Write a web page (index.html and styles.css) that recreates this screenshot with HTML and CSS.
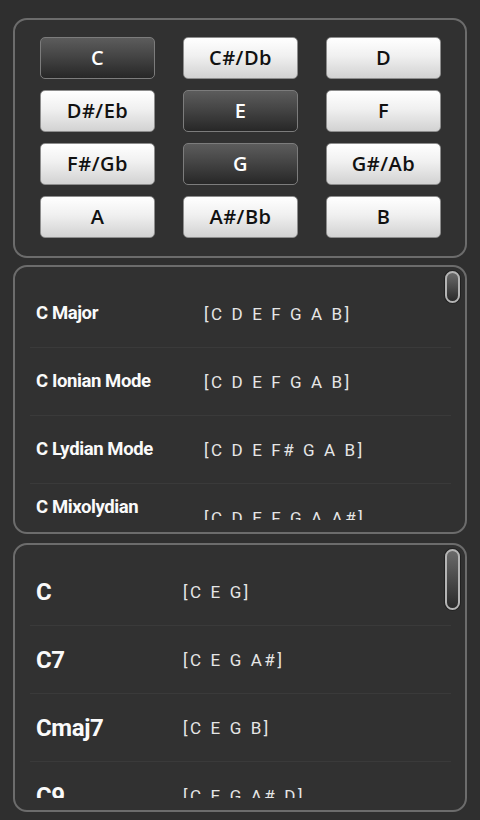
FILE: index.html
```html
<!DOCTYPE html>
<html>
<head>
<meta charset="utf-8">
<link rel="stylesheet" href="styles.css">
</head>
<body>
<div class="screen">
  <section class="panel keys">
    <div class="key-grid">
      <button class="key on">C</button>
      <button class="key">C#/Db</button>
      <button class="key">D</button>
      <button class="key">D#/Eb</button>
      <button class="key on">E</button>
      <button class="key">F</button>
      <button class="key">F#/Gb</button>
      <button class="key on">G</button>
      <button class="key">G#/Ab</button>
      <button class="key">A</button>
      <button class="key">A#/Bb</button>
      <button class="key">B</button>
    </div>
  </section>

  <section class="panel list-panel scales">
    <div class="list">
      <div class="row"><div class="name">C Major</div><div class="notes">[C D E F G A B]</div></div>
      <div class="row"><div class="name">C Ionian Mode</div><div class="notes">[C D E F G A B]</div></div>
      <div class="row"><div class="name">C Lydian Mode</div><div class="notes">[C D E F# G A B]</div></div>
      <div class="row"><div class="name">C Mixolydian Mode</div><div class="notes">[C D E F G A A#]</div></div>
    </div>
    <div class="thumb short"></div>
  </section>

  <section class="panel list-panel chords">
    <div class="list">
      <div class="row"><div class="name">C</div><div class="notes">[C E G]</div></div>
      <div class="row"><div class="name">C7</div><div class="notes">[C E G A#]</div></div>
      <div class="row"><div class="name">Cmaj7</div><div class="notes">[C E G B]</div></div>
      <div class="row"><div class="name">C9</div><div class="notes">[C E G A# D]</div></div>
    </div>
    <div class="thumb long"></div>
  </section>
</div>
</body>
</html>
```

FILE: styles.css
```css
html, body {
  margin: 0;
  padding: 0;
  background: #2f2f2f;
}
body {
  width: 480px;
  height: 820px;
  overflow: hidden;
  font-family: Roboto, "Liberation Sans", sans-serif;
  color: #fff;
}
.screen {
  padding: 18px 13px 0 13px;
  display: flex;
  flex-direction: column;
}
.panel {
  position: relative;
  border: 2px solid #6c6c6c;
  border-radius: 14px;
  background: #313131;
  box-sizing: border-box;
}
.keys {
  padding: 17px 0 18px 25px;
}
.key-grid {
  display: grid;
  grid-template-columns: repeat(3, 115px);
  grid-auto-rows: 42px;
  column-gap: 28px;
  row-gap: 11px;
}
.key {
  margin: 0;
  padding: 0;
  border: 1px solid #8d8d8d;
  border-radius: 5px;
  background: linear-gradient(#ffffff 0%, #f0f0f0 45%, #d2d2d2 100%);
  color: #111;
  font-family: "Open Sans", "DejaVu Sans", sans-serif;
  font-size: 20px;
  font-weight: 600;
  letter-spacing: 0.5px;
  line-height: 40px;
  text-align: center;
}
.key.on {
  border-color: #7c7c7c;
  background: linear-gradient(#5c5c5c 0%, #454545 45%, #272727 100%);
  color: #fff;
}
.scales {
  margin-top: 7px;
}
.chords {
  margin-top: 9px;
}
.list-panel {
  padding: 13px 0 12px 0;
}
.list {
  height: 240px;
  overflow: hidden;
}
.row {
  height: 68px;
  display: flex;
  align-items: center;
  margin: 0 14px 0 15px;
  padding-left: 6px;
  border-bottom: 1px solid #3a3a3a;
  box-sizing: border-box;
}
.name {
  font-weight: 700;
  color: #fafafa;
  letter-spacing: -0.4px;
}
.notes {
  font-size: 17px;
  letter-spacing: 2.6px;
  color: #e6e6e6;
}
.scales .name {
  width: 140px;
  flex: none;
  margin-right: 28px;
  font-size: 18.5px;
  line-height: 21px;
}
.chords .name {
  width: 147px;
  flex: none;
  font-size: 24px;
}
.thumb {
  position: absolute;
  right: 5px;
  top: 4px;
  width: 15px;
  box-sizing: border-box;
  border: 2px solid #b4b4b4;
  border-radius: 8px;
  background: linear-gradient(#6a6a6a, #2a2a2a);
  box-shadow: 0 0 0 1px #222;
}
.thumb.short { height: 32px; }
.thumb.long { height: 61px; }
```
